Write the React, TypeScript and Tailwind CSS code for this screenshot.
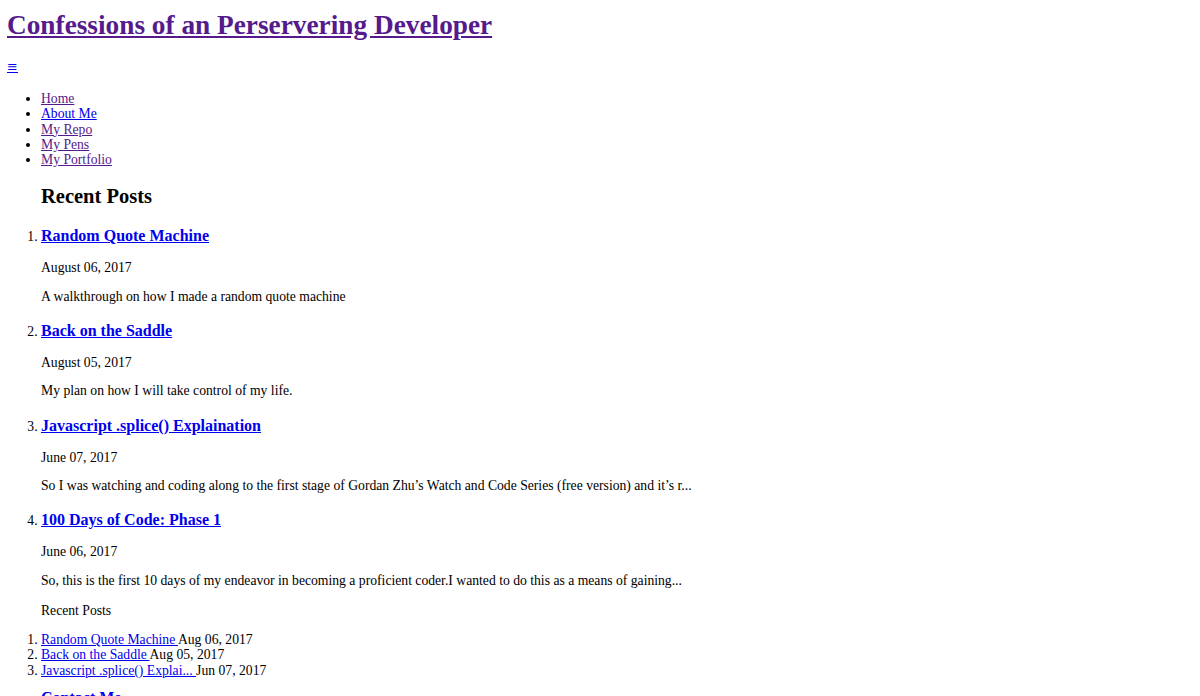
const navLinks = [
  { label: 'Home', visited: true },
  { label: 'About Me', visited: false },
  { label: 'My Repo', visited: true },
  { label: 'My Pens', visited: true },
  { label: 'My Portfolio', visited: true },
];

const posts = [
  {
    title: 'Random Quote Machine',
    date: 'August 06, 2017',
    excerpt: 'A walkthrough on how I made a random quote machine',
  },
  {
    title: 'Back on the Saddle',
    date: 'August 05, 2017',
    excerpt: 'My plan on how I will take control of my life.',
  },
  {
    title: 'Javascript .splice() Explaination',
    date: 'June 07, 2017',
    excerpt:
      'So I was watching and coding along to the first stage of Gordan Zhu\u2019s Watch and Code Series (free version) and it\u2019s r...',
  },
  {
    title: '100 Days of Code: Phase 1',
    date: 'June 06, 2017',
    excerpt:
      'So, this is the first 10 days of my endeavor in becoming a proficient coder.I wanted to do this as a means of gaining...',
  },
];

const sidebarPosts = [
  { title: 'Random Quote Machine', date: 'Aug 06, 2017' },
  { title: 'Back on the Saddle', date: 'Aug 05, 2017' },
  { title: 'Javascript .splice() Explai...', date: 'Jun 07, 2017' },
];

export default function App() {
  return (
    <div className="min-h-screen bg-white px-[7px] pt-[10px] font-['Liberation_Serif',serif] text-[13.67px] leading-[15.3px] text-black">
      <header>
        <h1 className="m-0 text-[27.3px] font-bold leading-[30.7px]">
          <a href="#" className="text-[#551A8B] underline">
            Confessions of an Perservering Developer
          </a>
        </h1>

        <a
          href="#"
          className="mt-[18px] block w-fit font-['DejaVu_Sans',sans-serif] text-[13px] text-[#0000EE] underline"
        >
          &equiv;
        </a>

        <ul className="mt-[17px] list-disc pl-[34px]">
          {navLinks.map((link) => (
            <li key={link.label}>
              <a
                href="#"
                className={link.visited ? 'text-[#551A8B] underline' : 'text-[#0000EE] underline'}
              >
                {link.label}
              </a>
            </li>
          ))}
        </ul>
      </header>

      <main className="pl-[34px]">
        <h2 className="mt-[18px] text-[20.5px] font-bold leading-[23px]">Recent Posts</h2>

        <ol className="list-decimal">
          {posts.map((post) => (
            <li key={post.title} className="mt-[18px] first:mt-[19px]">
              <h3 className="text-[16px] font-bold leading-[18px]">
                <a href="#" className="text-[#0000EE] underline">
                  {post.title}
                </a>
              </h3>
              <p className="mt-[15px]">{post.date}</p>
              <p className="mt-[13px]">{post.excerpt}</p>
            </li>
          ))}
        </ol>

        <p className="mt-[15px]">Recent Posts</p>

        <ol className="mt-[14px] list-decimal">
          {sidebarPosts.map((post) => (
            <li key={post.title}>
              <a href="#" className="text-[#0000EE] underline">
                {post.title + ' '}
              </a>
              {post.date}
            </li>
          ))}
        </ol>

        <h3 className="mt-[11px] text-[16px] font-bold leading-[18px]">
          <a href="#" className="text-[#0000EE] underline">
            Contact Me
          </a>
        </h3>
      </main>
    </div>
  );
}
